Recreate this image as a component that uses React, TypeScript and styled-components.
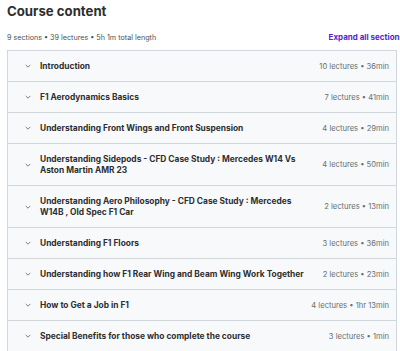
import React from 'react';
import styled, { createGlobalStyle } from 'styled-components';

type sectionProps = {
  title: string;
  meta: string;
};

const sections: sectionProps[] = [
  { title: 'Introduction', meta: '10 lectures • 36min' },
  { title: 'F1 Aerodynamics Basics', meta: '7 lectures • 41min' },
  { title: 'Understanding Front Wings and Front Suspension', meta: '4 lectures • 29min' },
  {
    title: 'Understanding Sidepods - CFD Case Study : Mercedes W14 Vs Aston Martin AMR 23',
    meta: '4 lectures • 50min',
  },
  {
    title: 'Understanding Aero Philosophy - CFD Case Study : Mercedes W14B , Old Spec F1 Car',
    meta: '2 lectures • 13min',
  },
  { title: 'Understanding F1 Floors', meta: '3 lectures • 36min' },
  { title: 'Understanding how F1 Rear Wing and Beam Wing Work Together', meta: '2 lectures • 23min' },
  { title: 'How to Get a Job in F1', meta: '4 lectures • 1hr 13min' },
  { title: 'Special Benefits for those who complete the course', meta: '3 lectures • 1min' },
];

const Chevron = () => (
  <ChevronWithStyled viewBox="0 0 8 8" aria-hidden>
    <path d="M2 3.2 L4 5.2 L6 3.2" fill="none" stroke="currentColor" strokeWidth="0.9" strokeLinecap="round" strokeLinejoin="round" />
  </ChevronWithStyled>
);

export default function App() {
  return (
    <>
      <GlobalStyle />
      <PageWithStyled>
        <HeadingWithStyled>Course content</HeadingWithStyled>
        <SummaryRowWithStyled>
          <SummaryTextWithStyled>9 sections • 39 lectures • 5h 1m total length</SummaryTextWithStyled>
          <ExpandButtonWithStyled>Expand all sections</ExpandButtonWithStyled>
        </SummaryRowWithStyled>
        <SectionListWithStyled>
          {sections.map((s) => (
            <SectionRowWithStyled key={s.title}>
              <Chevron />
              <SectionTitleWithStyled>{s.title}</SectionTitleWithStyled>
              <SectionMetaWithStyled>{s.meta}</SectionMetaWithStyled>
            </SectionRowWithStyled>
          ))}
        </SectionListWithStyled>
      </PageWithStyled>
    </>
  );
}

const GlobalStyle = createGlobalStyle`
  html, body {
    margin: 0;
    padding: 0;
    background: #fff;
    overflow: hidden;
  }
  body {
    font-family: Inter, "Liberation Sans", sans-serif;
    color: #2d2f31;
  }
`;

const PageWithStyled = styled.div`
  width: 400px;
  height: 351px;
  overflow: hidden;
  padding-left: 7px;
  box-sizing: border-box;
`;

const HeadingWithStyled = styled.h2`
  margin: 0;
  padding-top: 1px;
  font-size: 13.2px;
  line-height: 20px;
  font-weight: 700;
`;

const SummaryRowWithStyled = styled.div`
  display: flex;
  justify-content: space-between;
  align-items: center;
  width: 397px;
  height: 12px;
  margin-top: 10px;
  margin-bottom: 7px;
`;

const SummaryTextWithStyled = styled.span`
  font-size: 7.2px;
  color: #4d5256;
`;

const ExpandButtonWithStyled = styled.button`
  border: none;
  background: none;
  padding: 0;
  font-family: inherit;
  font-size: 8px;
  font-weight: 700;
  color: #5624d0;
  white-space: nowrap;
  cursor: pointer;
`;

const SectionListWithStyled = styled.div`
  width: 388px;
  border: 1px solid #d1d7dc;
  border-bottom: none;
`;

const SectionRowWithStyled = styled.div`
  display: flex;
  align-items: center;
  padding: 9.5px 7px 9.5px 16px;
  background: #f7f9fa;
  border-bottom: 1px solid #d1d7dc;
`;

const ChevronWithStyled = styled.svg`
  width: 8px;
  height: 8px;
  color: #6a6f73;
  flex-shrink: 0;
  margin-right: 8px;
`;

const SectionTitleWithStyled = styled.div`
  flex: 1;
  font-size: 8.4px;
  line-height: 11px;
  font-weight: 700;
  padding-right: 8px;
`;

const SectionMetaWithStyled = styled.div`
  flex-shrink: 0;
  font-size: 7.6px;
  line-height: 11px;
  color: #6a6f73;
  white-space: nowrap;
`;
